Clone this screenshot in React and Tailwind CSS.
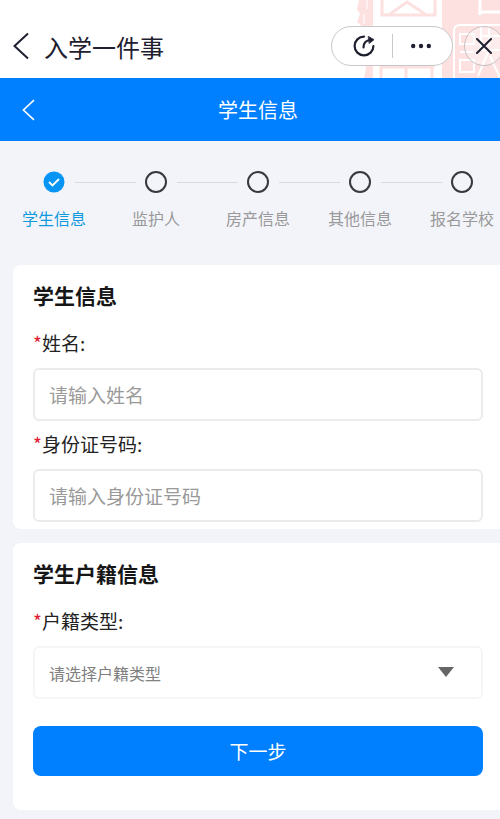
import React from "react";

const STEPS = ["学生信息", "监护人", "房产信息", "其他信息", "报名学校"];

function Chevron({ className }) {
  return (
    <svg viewBox="0 0 16 28" className={className} fill="none" stroke="currentColor" strokeWidth="2" aria-hidden="true">
      <path d="M15 1.5 1.5 14 15 26.5" />
    </svg>
  );
}

function SealArt() {
  return (
    <svg className="absolute right-0 top-0 h-full w-36" viewBox="0 0 144 78" fill="none" aria-hidden="true">
      <path d="M3 0H17V78H8L10 68 4 50 6 26 1 22 4 14 1 9z" fill="#fde0e0" />
      <path d="M11 0v9M8 14v10" stroke="#fff" strokeWidth="1" />
      <g stroke="#fde0e0" strokeWidth="3">
        <path d="M26 0V15H79V0M34 14 51 2 69 14" />
        <path d="M25 66V78M50 66V78M25 67H78M76 66V78" />
      </g>
      <path d="M86 0H144V78H86z" fill="#fde0e0" />
      <g stroke="#fff" strokeWidth="2">
        <path d="M124 0V15M124 12H144" strokeWidth="3" />
        <path d="M98 78V31Q98 25 104 25H144" />
        <path d="M104 34H118V44H104zM104 52H118M104 60H118V72H104z" />
        <path d="M125 26V48M133 26V46M125 36H144M122 50H144M132 52 122 76M134 56 144 78" />
      </g>
    </svg>
  );
}

function StatusHeader() {
  return (
    <header className="relative flex h-[78px] items-end overflow-hidden bg-white pb-3">
      <SealArt />
      <div className="flex h-10 w-full items-center pl-3 text-[#1e2030]">
        <button type="button" aria-label="返回" className="flex w-8 shrink-0">
          <Chevron className="h-7 w-[18px]" />
        </button>
        <h1 className="grow whitespace-nowrap pt-[2px] text-2xl">入学一件事</h1>
        <div className="relative mr-[11px] flex h-10 w-[122px] shrink-0 items-center rounded-full border border-[#c8c8ca] bg-white">
          <button type="button" aria-label="刷新" className="flex w-[60px] justify-center pl-1">
            <svg viewBox="0 0 24 24" className="size-6" fill="none" stroke="currentColor" strokeWidth="2.2" strokeLinecap="round" aria-hidden="true">
              <path d="M12 2.6A9.4 9.4 0 1 0 21.4 12" />
              <path d="M11.5 13.5C11.5 9 14 6.4 18.5 6" />
              <path d="m16.5 2.5 5.5 3.2-4.6 3.6z" fill="currentColor" strokeWidth="0.8" strokeLinejoin="round" />
            </svg>
          </button>
          <span className="h-6 w-px bg-[#c8c8ca]" />
          <button type="button" aria-label="更多" className="flex grow justify-center pr-1">
            <svg viewBox="0 0 20 6" className="h-[6px] w-5" fill="currentColor" aria-hidden="true">
              <circle cx="2.2" cy="3" r="2.2" />
              <circle cx="10" cy="3" r="2.2" />
              <circle cx="17.8" cy="3" r="2.2" />
            </svg>
          </button>
        </div>
        <button type="button" aria-label="关闭" className="relative -mr-1 flex size-10 shrink-0 items-center justify-center rounded-full border border-[#c8c0c2] bg-white/40">
          <svg viewBox="0 0 16 16" className="size-4" stroke="currentColor" strokeWidth="2" strokeLinecap="round" aria-hidden="true">
            <path d="m1 1 14 14M15 1 1 15" />
          </svg>
        </button>
      </div>
    </header>
  );
}

function Steps() {
  return (
    <ol className="-mr-[13px] flex pt-[30px] pb-[35px] pl-[3px]">
      {STEPS.map((name, i) => (
        <li key={name} className="relative flex flex-1 flex-col items-center gap-[13px]">
          {i === 0 ? (
            <svg viewBox="0 0 22 22" className="size-[22px]" fill="none" aria-hidden="true">
              <circle cx="11" cy="11" r="10.5" fill="#0795f5" />
              <path d="m6 11 3.5 3.5L16 8" stroke="#fff" strokeWidth="1.8" />
            </svg>
          ) : (
            <span className="size-[22px] rounded-full border-2 border-[#38383d]" />
          )}
          {i < STEPS.length - 1 && (
            <span className="absolute left-[calc(50%+21px)] right-[calc(-50%+20px)] top-[11px] h-px bg-[#d9dade]" />
          )}
          <span className={i === 0 ? "whitespace-nowrap text-base text-[#1199dd]" : "whitespace-nowrap text-base text-[#999999]"}>
            {name}
          </span>
        </li>
      ))}
    </ol>
  );
}

function Label({ id, children }) {
  return (
    <label htmlFor={id} className="block text-[19px] leading-7 text-[#222222]">
      <span className="text-[#e02030]">*</span>
      {children}:
    </label>
  );
}

function TextField({ id, label }) {
  return (
    <div>
      <Label id={id}>{label}</Label>
      <input
        id={id}
        type="text"
        placeholder={"请输入" + label}
        className="mt-[11px] block h-[53px] w-full rounded-md border-2 border-[#ebebeb] bg-white px-[14px] text-[19px] outline-none placeholder:text-[#999999]"
      />
    </div>
  );
}

export default function App() {
  return (
    <div className="min-h-screen overflow-x-hidden bg-[#f3f4f9] font-['Noto_Sans_CJK_SC',sans-serif]">
      <StatusHeader />
      <nav className="grid h-[63px] grid-cols-[1fr_auto_1fr] items-center bg-[#007fff] px-[22px] text-white">
        <button type="button" aria-label="返回上一页" className="flex w-6">
          <Chevron className="h-[22px] w-[13px]" />
        </button>
        <h2 className="pl-4 text-xl">学生信息</h2>
      </nav>
      <Steps />
      <main className="flex flex-col gap-[14px] pb-2 pl-[13px]">
        <section className="rounded-l-lg bg-white pt-[14px] pr-[17px] pb-[7px] pl-5">
          <h3 className="mb-[18px] text-[21px] leading-8 font-bold text-[#161616]">学生信息</h3>
          <div className="flex flex-col gap-[9px]">
            <TextField id="name" label="姓名" />
            <TextField id="idno" label="身份证号码" />
          </div>
        </section>
        <section className="rounded-l-lg bg-white pt-[14px] pr-[17px] pb-[34px] pl-5">
          <h3 className="mb-[18px] text-[21px] leading-8 font-bold text-[#161616]">学生户籍信息</h3>
          <Label id="household">户籍类型</Label>
          <div className="relative mt-[11px]">
            <select id="household" className="block h-[53px] w-full appearance-none rounded-md border-2 border-[#f5f5f5] bg-white px-[14px] text-base text-[#808080] outline-none">
              <option>请选择户籍类型</option>
            </select>
            <svg viewBox="0 0 16 10" className="pointer-events-none absolute right-[29px] top-[21px] h-[10px] w-4" fill="#666666" aria-hidden="true">
              <path d="M0 0h16L8 10z" />
            </svg>
          </div>
          <button type="button" className="mt-[27px] block h-[50px] w-full rounded-lg bg-[#007fff] text-[19px] text-white">
            下一步
          </button>
        </section>
      </main>
    </div>
  );
}
